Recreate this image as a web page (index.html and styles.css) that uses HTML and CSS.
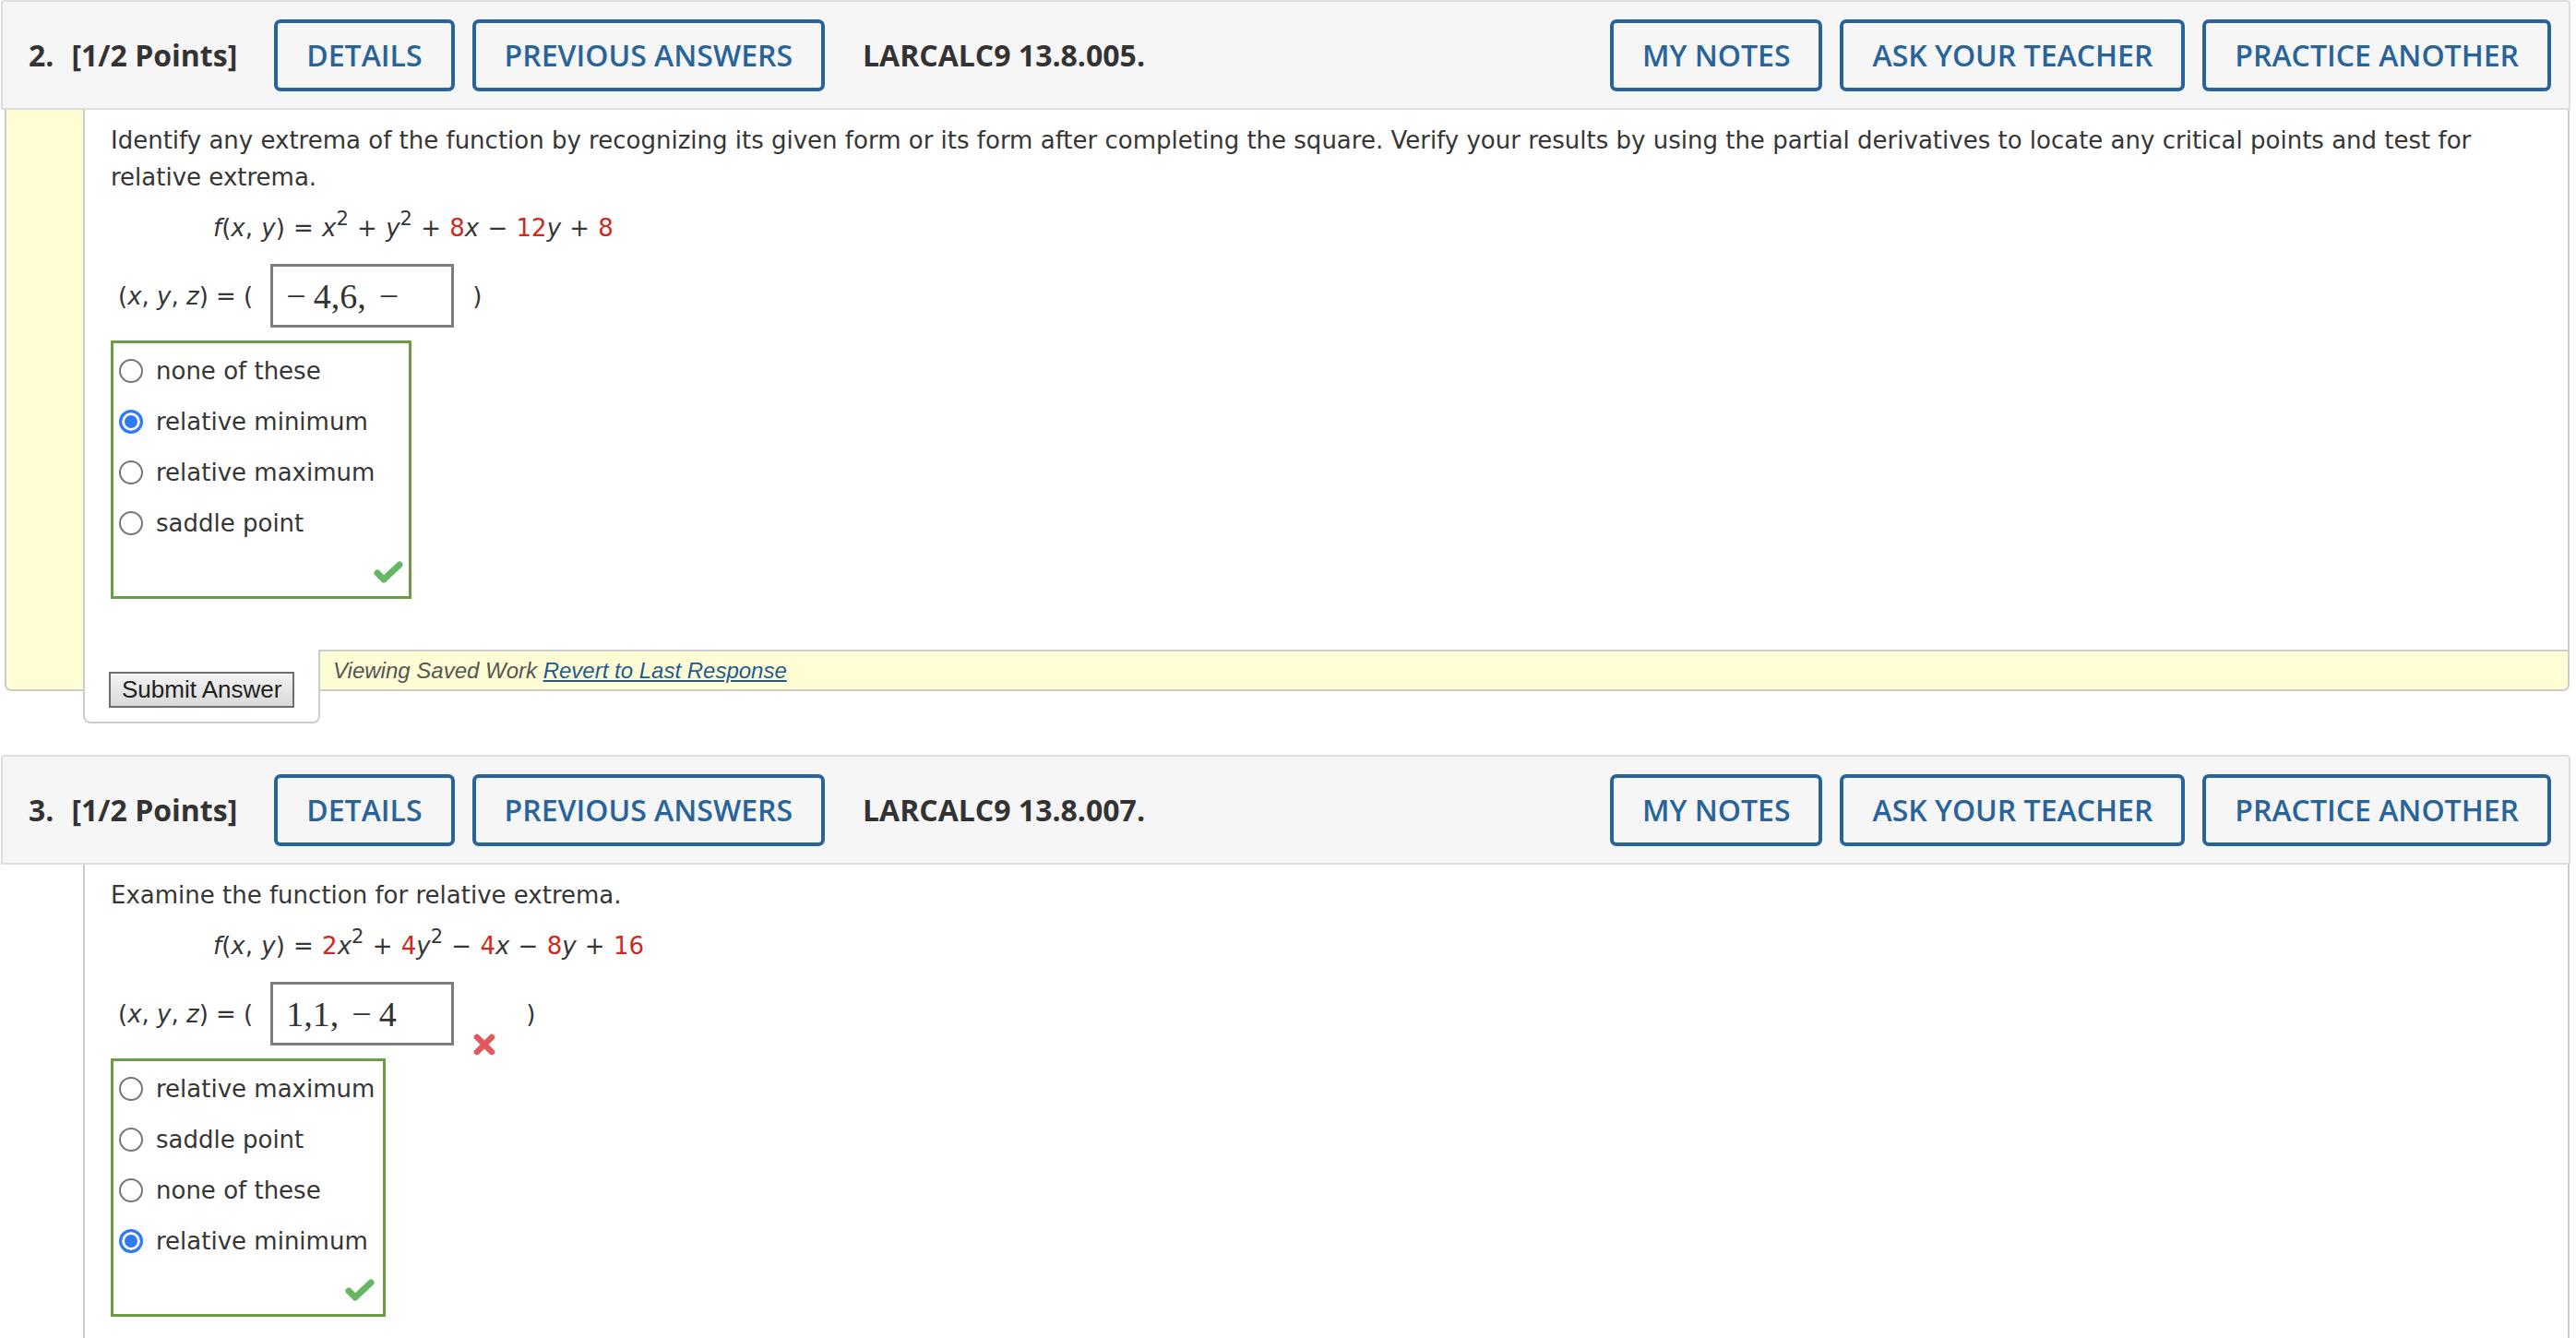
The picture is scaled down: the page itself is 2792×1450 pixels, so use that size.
FILE: index.html
```html
<!DOCTYPE html>
<html lang="en">
<head>
    <meta charset="UTF-8">
    <title>Assignment</title>
    <link rel="stylesheet" href="styles.css">
</head>
<body>

    <!-- Question 2 -->
    <div class="question">
        <div class="q-head">
            <span class="q-num">2.</span>
            <span class="q-points">[1/2 Points]</span>
            <a class="q-btn" href="#">DETAILS</a>
            <a class="q-btn" href="#">PREVIOUS ANSWERS</a>
            <span class="q-ref">LARCALC9 13.8.005.</span>
            <div class="q-tools">
                <a class="q-btn" href="#">MY NOTES</a>
                <a class="q-btn" href="#">ASK YOUR TEACHER</a>
                <a class="q-btn" href="#">PRACTICE ANOTHER</a>
            </div>
        </div>

        <div class="q-body saved">
            <div class="panel">
                <p class="prompt">Identify any extrema of the function by recognizing its given form or its form after completing the square. Verify your results by using the partial derivatives to locate any critical points and test for<br>relative extrema.</p>

                <div class="formula"><i>f</i>(<i>x</i>, <i>y</i>) = <i>x</i><sup>2</sup> + <i>y</i><sup>2</sup> + <span class="coef">8</span><i>x</i> − <span class="coef">12</span><i>y</i> + <span class="coef">8</span></div>

                <div class="answer-row">
                    <span class="tuple">(<i>x</i>, <i>y</i>, <i>z</i>) = (</span>
                    <div class="math-box"><span class="mo lead">−</span>4,6,<span class="mo">−</span></div>
                    <span class="close">)</span>
                </div>

                <div class="choices choices-wide">
                    <div class="choice"><span class="radio"></span>none of these</div>
                    <div class="choice"><span class="radio on"></span>relative minimum</div>
                    <div class="choice"><span class="radio"></span>relative maximum</div>
                    <div class="choice"><span class="radio"></span>saddle point</div>
                    <div class="mark">
                        <svg width="32" height="26" viewBox="0 0 32 26"><polyline points="4,14 11,21 28,5" fill="none" stroke="#64b863" stroke-width="7" stroke-linecap="round" stroke-linejoin="round"/></svg>
                    </div>
                </div>
            </div>

            <div class="foot">
                <div class="submit-tab">
                    <button class="submit">Submit Answer</button>
                </div>
                <div class="saved-note">Viewing Saved Work&nbsp;<a href="#">Revert to Last Response</a></div>
            </div>
        </div>
    </div>

    <!-- Question 3 -->
    <div class="question">
        <div class="q-head">
            <span class="q-num">3.</span>
            <span class="q-points">[1/2 Points]</span>
            <a class="q-btn" href="#">DETAILS</a>
            <a class="q-btn" href="#">PREVIOUS ANSWERS</a>
            <span class="q-ref">LARCALC9 13.8.007.</span>
            <div class="q-tools">
                <a class="q-btn" href="#">MY NOTES</a>
                <a class="q-btn" href="#">ASK YOUR TEACHER</a>
                <a class="q-btn" href="#">PRACTICE ANOTHER</a>
            </div>
        </div>

        <div class="q-body">
            <div class="panel">
                <p class="prompt">Examine the function for relative extrema.</p>

                <div class="formula"><i>f</i>(<i>x</i>, <i>y</i>) = <span class="coef">2</span><i>x</i><sup>2</sup> + <span class="coef">4</span><i>y</i><sup>2</sup> − <span class="coef">4</span><i>x</i> − <span class="coef">8</span><i>y</i> + <span class="coef">16</span></div>

                <div class="answer-row">
                    <span class="tuple">(<i>x</i>, <i>y</i>, <i>z</i>) = (</span>
                    <div class="math-box">1,1,<span class="mo">−</span>4</div>
                    <svg class="wrong" width="26" height="26" viewBox="0 0 26 26"><path d="M5 5 L21 21 M21 5 L5 21" stroke="#e05a5c" stroke-width="6.5" stroke-linecap="round"/></svg>
                    <span class="close close-after-icon">)</span>
                </div>

                <div class="choices">
                    <div class="choice"><span class="radio"></span>relative maximum</div>
                    <div class="choice"><span class="radio"></span>saddle point</div>
                    <div class="choice"><span class="radio"></span>none of these</div>
                    <div class="choice"><span class="radio on"></span>relative minimum</div>
                    <div class="mark">
                        <svg width="32" height="26" viewBox="0 0 32 26"><polyline points="4,14 11,21 28,5" fill="none" stroke="#64b863" stroke-width="7" stroke-linecap="round" stroke-linejoin="round"/></svg>
                    </div>
                </div>
            </div>
        </div>
    </div>

</body>
</html>
```

FILE: styles.css
```css
body {
    margin: 0;
    font-family: "DejaVu Sans", Verdana, sans-serif;
    font-size: 26px;
    color: #363636;
    background-color: #fff;
}

.question {
    margin: 0 6px 0 1px;
}

.question + .question {
    margin-top: 69px;
}

/* header bar */
.q-head {
    display: flex;
    align-items: center;
    height: 119px;
    box-sizing: border-box;
    padding: 0 19px 0 28px;
    background-color: #f6f6f6;
    border: 2px solid #dedede;
    border-radius: 4px 4px 0 0;
    font-family: "Open Sans", sans-serif;
    font-size: 32px;
    color: #333;
}

.q-num,
.q-points,
.q-ref {
    font-weight: 700;
}

.q-num {
    margin-right: 19px;
}

.q-points {
    margin-right: 40px;
}

.q-btn {
    display: inline-flex;
    align-items: center;
    height: 78px;
    box-sizing: border-box;
    padding: 0 31px;
    border: 4px solid #28649a;
    border-radius: 7px;
    color: #28649a;
    font-weight: 600;
    text-decoration: none;
    margin-right: 19px;
}

.q-ref {
    margin-left: 22px;
}

.q-tools {
    margin-left: auto;
    display: flex;
}

.q-tools .q-btn:last-child {
    margin-right: 0;
}

/* body */
.q-body {
    margin: 0 1px 0 4px;
    padding-left: 83px;
    border: 2px solid #ccc;
    border-top: none;
    border-left-color: transparent;
    border-bottom: none;
}

.q-body.saved {
    background-color: #fffdd4;
    border-left-color: #ccc;
    border-bottom: 2px solid #ccc;
    border-radius: 0 0 7px 7px;
}

.panel {
    background-color: #fff;
    border-left: 2px solid #ccc;
    padding: 13px 20px 55px 28px;
}

.prompt {
    margin: 0;
    line-height: 40px;
}

.formula {
    margin: 15px 0 0 111px;
    line-height: 40px;
    word-spacing: 1px;
}

.formula sup {
    font-size: 21px;
    line-height: 0;
    vertical-align: 12px;
}

.coef {
    color: #cc2a1f;
}

.answer-row {
    display: flex;
    align-items: center;
    margin: 19px 0 0 8px;
}

.tuple {
    margin-right: 19px;
}

.math-box {
    display: flex;
    align-items: center;
    width: 199px;
    height: 69px;
    box-sizing: border-box;
    padding-left: 14px;
    border: 3px solid #7d7d7d;
    font-family: "Liberation Serif", "Times New Roman", serif;
    font-size: 38px;
    color: #333;
}

.mo {
    margin: 0 8px 0 14px;
}

.mo.lead {
    margin-left: 0;
}

.close {
    margin-left: 20px;
}

.wrong {
    align-self: flex-end;
    margin: 0 0 -12px 20px;
}

.close-after-icon {
    margin-left: 32px;
}

/* choices */
.choices {
    width: fit-content;
    box-sizing: border-box;
    margin-top: 14px;
    padding: 2px 9px 0 6px;
    border: 3px solid #6a9e44;
}

.choices-wide {
    width: 326px;
    padding-right: 6px;
}

.choice {
    display: flex;
    align-items: center;
    height: 55px;
    white-space: nowrap;
}

.radio {
    flex: none;
    width: 26px;
    height: 26px;
    box-sizing: border-box;
    margin-right: 14px;
    border: 2px solid #777;
    border-radius: 50%;
    background-color: #fff;
}

.radio.on {
    border: 3px solid #2f7bf5;
    background-color: #2f7bf5;
    box-shadow: inset 0 0 0 3px #fff;
}

.mark {
    display: flex;
    justify-content: flex-end;
    align-items: center;
    height: 52px;
}

/* footer */
.foot {
    display: flex;
}

.submit-tab {
    flex: none;
    width: 257px;
    height: 80px;
    box-sizing: border-box;
    margin-bottom: -37px;
    padding: 24px 0 0 26px;
    background-color: #fff;
    border: 2px solid #ccc;
    border-top: none;
    border-radius: 0 0 8px 8px;
}

.submit {
    height: 39px;
    padding: 0 12px;
    border: 2px solid #6e6e6e;
    border-radius: 0;
    background: linear-gradient(#f4f4f4, #d9d9d9);
    font-family: "Liberation Sans", Arial, sans-serif;
    font-size: 26px;
    color: #222;
}

.saved-note {
    flex: 1;
    display: flex;
    align-items: center;
    padding-left: 14px;
    border-top: 2px solid #ccc;
    font-family: "Liberation Sans", Arial, sans-serif;
    font-style: italic;
    font-size: 24px;
    color: #555;
}

.saved-note a {
    color: #1f5a96;
}
```
